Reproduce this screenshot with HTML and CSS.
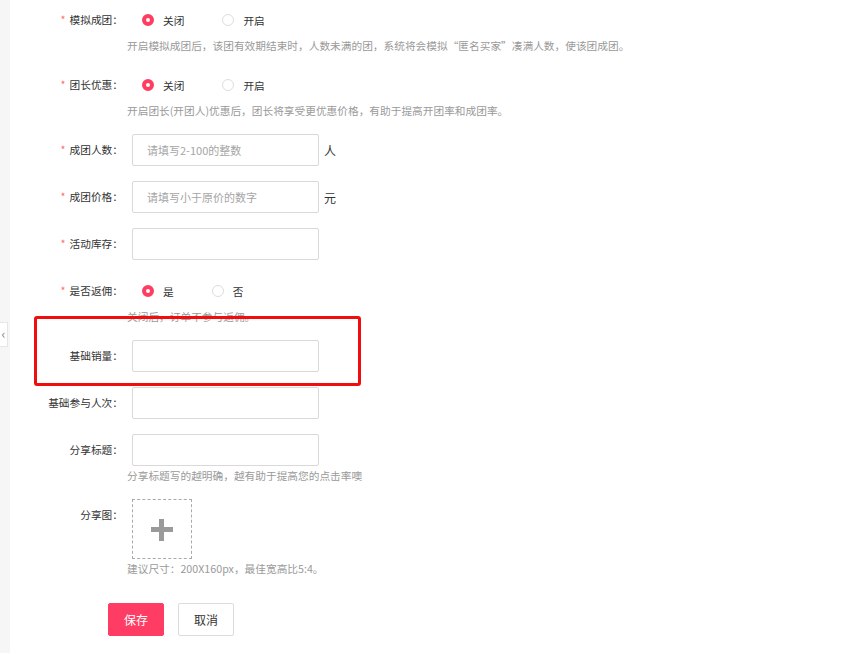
FILE: index.html
```html
<!DOCTYPE html>
<html lang="zh-CN">

<head>
    <meta charset="UTF-8" />
    <title>拼团设置</title>
    <link rel="stylesheet" href="styles.css">
</head>

<body>
    <div class="page">
        <!-- 左侧栏 -->
        <div class="aside">
            <span class="toggle">‹</span>
        </div>
        <div class="main">
            <div class="form">
                <div class="item">
                    <div class="row">
                        <label class="label"><i>*</i>模拟成团：</label>
                        <div class="radios">
                            <span class="radio checked">关闭</span>
                            <span class="radio">开启</span>
                        </div>
                    </div>
                    <p class="tip">开启模拟成团后，该团有效期结束时，人数未满的团，系统将会模拟“匿名买家”凑满人数，使该团成团。</p>
                </div>
                <div class="item">
                    <div class="row">
                        <label class="label"><i>*</i>团长优惠：</label>
                        <div class="radios">
                            <span class="radio checked">关闭</span>
                            <span class="radio">开启</span>
                        </div>
                    </div>
                    <p class="tip">开启团长(开团人)优惠后，团长将享受更优惠价格，有助于提高开团率和成团率。</p>
                </div>
                <div class="item">
                    <div class="row">
                        <label class="label"><i>*</i>成团人数：</label>
                        <input type="text" placeholder="请填写2-100的整数" />
                        <span class="unit">人</span>
                    </div>
                </div>
                <div class="item">
                    <div class="row">
                        <label class="label"><i>*</i>成团价格：</label>
                        <input type="text" placeholder="请填写小于原价的数字" />
                        <span class="unit">元</span>
                    </div>
                </div>
                <div class="item">
                    <div class="row">
                        <label class="label"><i>*</i>活动库存：</label>
                        <input type="text" />
                    </div>
                </div>
                <div class="item">
                    <div class="row">
                        <label class="label"><i>*</i>是否返佣：</label>
                        <div class="radios">
                            <span class="radio checked">是</span>
                            <span class="radio">否</span>
                        </div>
                    </div>
                    <p class="tip">关闭后，订单不参与返佣。</p>
                </div>
                <div class="item">
                    <div class="row">
                        <label class="label">基础销量：</label>
                        <input type="text" />
                    </div>
                </div>
                <div class="item">
                    <div class="row">
                        <label class="label">基础参与人次：</label>
                        <input type="text" />
                    </div>
                </div>
                <div class="item">
                    <div class="row">
                        <label class="label">分享标题：</label>
                        <input type="text" />
                    </div>
                    <p class="tip">分享标题写的越明确，越有助于提高您的点击率噢</p>
                </div>
                <div class="item">
                    <div class="row top">
                        <label class="label">分享图：</label>
                        <div class="upload"><span class="plus"></span></div>
                    </div>
                    <p class="tip">建议尺寸：200X160px，最佳宽高比5:4。</p>
                </div>
                <div class="btns">
                    <button class="btn primary">保存</button>
                    <button class="btn">取消</button>
                </div>
            </div>
            <!-- 标注框 -->
            <div class="mark"></div>
        </div>
    </div>
</body>

</html>
```

FILE: styles.css
```css
body {
    margin: 0;
    padding: 0;
    background-color: #fff;
    font-family: "Noto Sans CJK SC", "Liberation Sans", sans-serif;
    font-size: 10.7px;
    color: #333;
}

.page {
    display: flex;
    min-height: 653px;
}

.aside {
    position: relative;
    width: 10px;
    background-color: #f6f6f6;
}

.aside .toggle {
    position: absolute;
    top: 322px;
    left: 0;
    width: 8px;
    height: 25px;
    box-sizing: border-box;
    border: 1px solid #e6e6e6;
    border-left: none;
    background-color: #fff;
    color: #888;
    font-size: 13px;
    line-height: 22px;
    text-align: center;
}

.main {
    position: relative;
    flex: 1;
}

.form {
    padding-top: 4px;
}

.item {
    margin-bottom: 15px;
}

.row {
    display: flex;
    align-items: center;
    height: 32px;
}

.row.top {
    align-items: flex-start;
    height: 60px;
}

.label {
    width: 113px;
    line-height: 32px;
    text-align: right;
    color: #333;
}

.label i {
    font-style: normal;
    color: #ff6f6f;
    margin-right: 4px;
}

.row input,
.row .radios,
.row .upload {
    margin-left: 9px;
}

.row input {
    width: 187px;
    height: 32px;
    padding: 0 14px;
    box-sizing: border-box;
    border: 1px solid #d9d9d9;
    border-radius: 2px;
    outline: none;
    font-family: inherit;
    font-size: 11px;
    color: #333;
}

.row input::placeholder {
    color: #a5a5a5;
}

.unit {
    margin-left: 5px;
    font-size: 12px;
}

.radios {
    display: flex;
    padding-left: 10px;
}

.radio {
    display: flex;
    align-items: center;
    margin-right: 38px;
}

.radio::before {
    content: "";
    width: 12px;
    height: 12px;
    margin-right: 9px;
    box-sizing: border-box;
    border: 1px solid #dcdde3;
    border-radius: 50%;
    background-color: #fff;
}

.radio.checked::before {
    border: 4px solid #ff3d60;
}

.tip {
    margin: 2px 0 0 117px;
    line-height: 16px;
    color: #9a9a9a;
}

.upload {
    display: flex;
    align-items: center;
    justify-content: center;
    width: 60px;
    height: 60px;
    box-sizing: border-box;
    border: 1px dashed #aaa;
}

.plus {
    position: relative;
    width: 22px;
    height: 5px;
    background-color: #9a9a9a;
}

.plus::after {
    content: "";
    position: absolute;
    top: -8px;
    left: 8px;
    width: 5px;
    height: 22px;
    background-color: #9a9a9a;
}

.btns {
    display: flex;
    gap: 14px;
    margin-top: 26px;
    padding-left: 98px;
}

.btn {
    width: 56px;
    height: 33px;
    border: 1px solid #dcdcdc;
    border-radius: 2px;
    background-color: #fff;
    font-family: inherit;
    font-size: 12px;
    color: #333;
}

.btn.primary {
    border-color: #ff3d64;
    background-color: #ff3d64;
    color: #fff;
}

.mark {
    position: absolute;
    top: 316px;
    left: 24px;
    width: 327px;
    height: 70px;
    box-sizing: border-box;
    border: 3px solid #f10d0d;
    border-radius: 3px;
}
```
